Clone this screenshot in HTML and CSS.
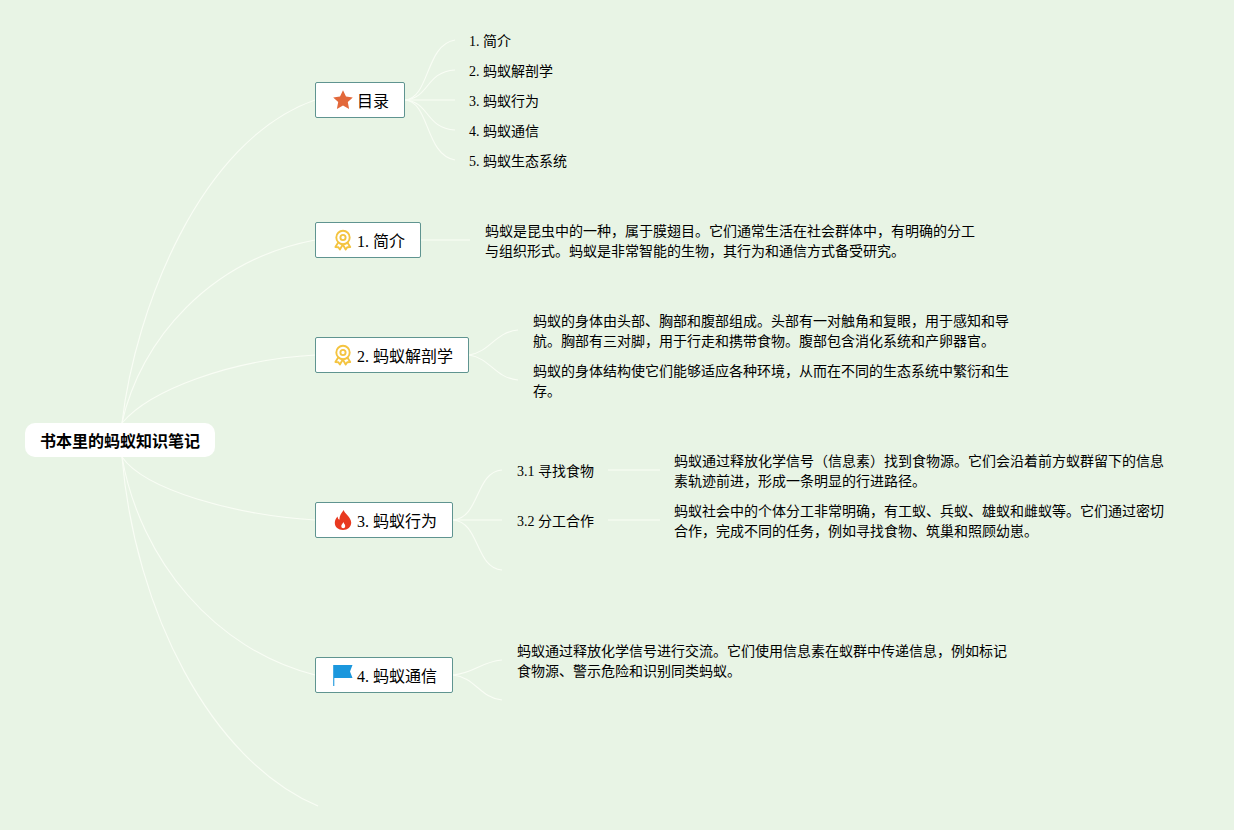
FILE: index.html
```html
<!DOCTYPE html>
<html lang="zh-CN">
<head>
<meta charset="utf-8">
<title>书本里的蚂蚁知识笔记</title>
<link rel="stylesheet" href="styles.css">
</head>
<body>
<main class="map">
  <svg class="links" width="1234" height="830" viewBox="0 0 1234 830">
    <g class="trunk">
      <path d="M122 423C135 310 200 140 315 100"/>
      <path d="M122 423C140 340 210 260 315 240"/>
      <path d="M122 423C150 390 230 360 315 355"/>
      <path d="M122 457C145 490 235 515 315 520"/>
      <path d="M122 457C140 560 215 650 315 675"/>
      <path d="M122 457C135 610 210 760 318 806"/>
    </g>
    <g class="branch">
      <path d="M405 100C430 98 425 45 455 40"/>
      <path d="M405 100C430 98 425 72 455 70"/>
      <path d="M405 100H455"/>
      <path d="M405 100C430 102 425 128 455 130"/>
      <path d="M405 100C430 102 425 155 455 160"/>
      <path d="M421 240H470"/>
      <path d="M469 355C490 352 495 332 518 330"/>
      <path d="M469 355C490 358 495 378 518 380"/>
      <path d="M453 520C480 518 475 472 502 470"/>
      <path d="M453 520H502"/>
      <path d="M453 520C480 522 475 568 502 570"/>
      <path d="M608 470H660"/>
      <path d="M608 520H660"/>
      <path d="M453 675C475 673 480 662 502 660"/>
      <path d="M453 675C475 677 480 698 502 700"/>
    </g>
  </svg>

  <div class="node root">书本里的蚂蚁知识笔记</div>

  <div class="node topic t-toc">
    <svg class="icon" viewBox="0 0 20 20"><path class="star" d="M10 .2l3 6.300 6.800.9-5 4.700 1.300 6.900L10 15.600 3.900 19l1.300-6.900-5-4.700 6.800-.9z"/></svg>
    <span class="label">目录</span>
  </div>
  <div class="leaf l1">1. 简介</div>
  <div class="leaf l2">2. 蚂蚁解剖学</div>
  <div class="leaf l3">3. 蚂蚁行为</div>
  <div class="leaf l4">4. 蚂蚁通信</div>
  <div class="leaf l5">5. 蚂蚁生态系统</div>

  <div class="node topic t-intro">
    <svg class="icon" viewBox="0 0 20 20"><g class="medal"><circle cx="10" cy="7.500" r="6.700"/><circle cx="10" cy="7.500" r="2.600"/><path d="M5.200 12.500l-2.800 4.500 3 .2 1.500 2.300 2.900-4.900 2.900 4.900 1.500-2.300 3-.2-2.800-4.500"/></g></svg>
    <span class="label">1. 简介</span>
  </div>
  <p class="para p-intro">蚂蚁是昆虫中的一种，属于膜翅目。它们通常生活在社会群体中，有明确的分工与组织形式。蚂蚁是非常智能的生物，其行为和通信方式备受研究。</p>

  <div class="node topic t-anatomy">
    <svg class="icon" viewBox="0 0 20 20"><g class="medal"><circle cx="10" cy="7.500" r="6.700"/><circle cx="10" cy="7.500" r="2.600"/><path d="M5.200 12.500l-2.800 4.500 3 .2 1.500 2.300 2.900-4.900 2.900 4.900 1.500-2.300 3-.2-2.800-4.500"/></g></svg>
    <span class="label">2. 蚂蚁解剖学</span>
  </div>
  <p class="para p-anatomy1">蚂蚁的身体由头部、胸部和腹部组成。头部有一对触角和复眼，用于感知和导航。胸部有三对脚，用于行走和携带食物。腹部包含消化系统和产卵器官。</p>
  <p class="para p-anatomy2">蚂蚁的身体结构使它们能够适应各种环境，从而在不同的生态系统中繁衍和生存。</p>

  <div class="node topic t-behavior">
    <svg class="icon" viewBox="0 0 20 20"><path class="flame" d="M10.800 0c.6 3.800 7.200 6.700 7.400 12.600.1 4.500-3.600 7.400-8.200 7.400S1.700 17.100 1.800 12.800c0-2.700 1.300-4.800 2.800-6.400.1 1.600.6 2.800 1.800 3.400C6.300 6 8.300 2.800 10.800 0zM10.400 12c-.4 1.300-2.100 2.400-2.100 4 0 1.300.8 2.300 1.900 2.300s2-1 2-2.300c0-1.700-1.500-2.600-1.800-4z"/></svg>
    <span class="label">3. 蚂蚁行为</span>
  </div>
  <div class="leaf l-find">3.1 寻找食物</div>
  <div class="leaf l-work">3.2 分工合作</div>
  <p class="para p-find">蚂蚁通过释放化学信号（信息素）找到食物源。它们会沿着前方蚁群留下的信息素轨迹前进，形成一条明显的行进路径。</p>
  <p class="para p-work">蚂蚁社会中的个体分工非常明确，有工蚁、兵蚁、雄蚁和雌蚁等。它们通过密切合作，完成不同的任务，例如寻找食物、筑巢和照顾幼崽。</p>

  <div class="node topic t-comm">
    <svg class="icon" viewBox="0 0 20 20"><path class="flag" d="M.2 0H19.500L17 6.500l2.500 6.500H1.300V21H.2z"/></svg>
    <span class="label">4. 蚂蚁通信</span>
  </div>
  <p class="para p-comm">蚂蚁通过释放化学信号进行交流。它们使用信息素在蚁群中传递信息，例如标记食物源、警示危险和识别同类蚂蚁。</p>
</main>
</body>
</html>
```
FILE: styles.css
```css
* { box-sizing: border-box; }
html, body { margin: 0; padding: 0; }
body {
  background: #e8f4e5;
  color: #000;
  font-family: "Liberation Serif", "Noto Sans CJK SC", serif;
  overflow: hidden;
}
.map { position: relative; width: 1234px; height: 830px; overflow: hidden; }
.links { position: absolute; left: 0; top: 0; }
.links path { fill: none; stroke: #f9fdf5; stroke-width: 1.1; }

.node { position: absolute; display: flex; align-items: center; background: #fff; }
.root {
  left: 25px; top: 423px; width: 190px; height: 34px;
  justify-content: center;
  border-radius: 10px;
  font-size: 16px; font-weight: 700; color: #000;
}
.topic {
  height: 36px;
  padding-left: 17px; gap: 4px;
  border: 1px solid #5f9490;
  border-radius: 2px;
  font-size: 16px; line-height: 20px;
}
.label { padding-top: 4px; }
.icon { width: 20px; height: 20px; flex: none; overflow: visible; }
.star { fill: #e2683a; }
.medal { fill: none; stroke: #f4c440; stroke-width: 1.900; stroke-linejoin: round; }
.flame { fill: #e8391f; fill-rule: evenodd; }
.flag { fill: #1b97dd; }

.t-toc { left: 315px; top: 82px; width: 90px; }
.t-intro { left: 315px; top: 222px; width: 106px; }
.t-anatomy { left: 315px; top: 337px; width: 154px; }
.t-behavior { left: 315px; top: 502px; width: 138px; }
.t-comm { left: 315px; top: 657px; width: 138px; }

.leaf { position: absolute; font-size: 14px; line-height: 20px; white-space: nowrap; }
.l1 { left: 469px; top: 32px; }
.l2 { left: 469px; top: 62px; }
.l3 { left: 469px; top: 92px; }
.l4 { left: 469px; top: 122px; }
.l5 { left: 469px; top: 152px; }
.l-find { left: 517px; top: 462px; }
.l-work { left: 517px; top: 512px; }

.para { position: absolute; margin: 0; font-size: 14px; line-height: 20px; width: 492px; }
.p-intro { left: 485px; top: 222px; }
.p-anatomy1 { left: 533px; top: 312px; width: 478px; }
.p-anatomy2 { left: 533px; top: 362px; width: 478px; }
.p-find { left: 674px; top: 452px; }
.p-work { left: 674px; top: 502px; }
.p-comm { left: 517px; top: 642px; }
```
